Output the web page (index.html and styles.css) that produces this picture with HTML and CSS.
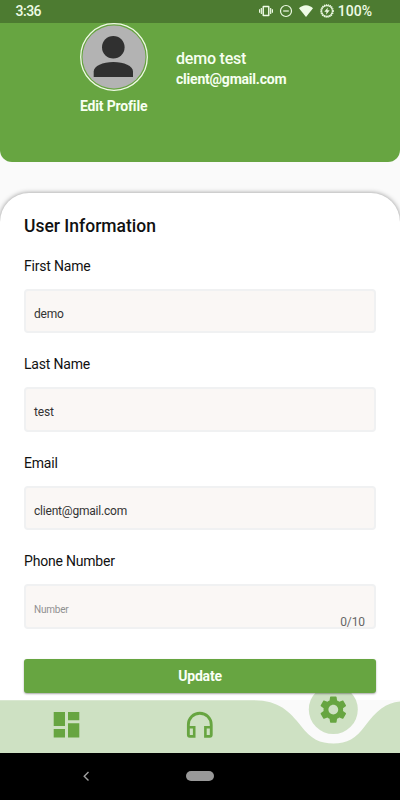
FILE: index.html
```html
<!DOCTYPE html>
<html lang="en">
<head>
<meta charset="utf-8">
<title>Profile</title>
<link rel="stylesheet" href="styles.css">
</head>
<body>
<div class="screen">
  <div class="status">
    <span class="time">3:36</span>
    <div class="status-icons">
      <svg width="14" height="14" viewBox="0 0 24 24" fill="currentColor"><path d="M0 15h2V9H0v6zm3 2h2V7H3v10zm19-8v6h2V9h-2zm-3 8h2V7h-2v10zM16.500 3h-9C6.670 3 6 3.670 6 4.500v15c0 .83.67 1.500 1.500 1.500h9c.83 0 1.500-.67 1.500-1.500v-15c0-.83-.67-1.500-1.500-1.500zM15.500 18.500h-7v-13h7z"/></svg>
      <svg width="14" height="14" viewBox="0 0 14 14" fill="none" stroke="currentColor" stroke-width="1.200"><circle cx="7" cy="7" r="5.500"/><path d="M4.200 7h5.600"/></svg>
      <svg width="14" height="14" viewBox="0 0 14 14" fill="currentColor"><path d="M7 13 0 4.300C1.700 2.500 4.200 1.200 7 1.200s5.300 1.300 7 3.100z"/></svg>
      <svg width="14" height="14" viewBox="0 0 14 14" fill="none" stroke="currentColor"><circle cx="7" cy="7" r="6.200" stroke-width="1.300" stroke-dasharray="1.200 .75"/><circle cx="7" cy="7" r="5.400" stroke-width="1.100"/><path d="M7.900 3.400 4.300 7.700h2.200l-.5 3 3.700-4.400H7.400z" fill="currentColor" stroke="none"/></svg>
      <span class="battery">100%</span>
    </div>
  </div>
  <header class="header">
    <div class="profile">
      <svg class="avatar" width="68" height="68" viewBox="0 0 68 68"><circle cx="34" cy="34" r="33.300" fill="none" stroke="#f0fae6" stroke-width="1.300"/><circle cx="34" cy="34" r="31.500" fill="#b3b3b3"/><circle cx="33.300" cy="24.200" r="11.300" fill="#303030"/><path d="M13.700 54v-5.500c0-5.500 9-9.500 19.700-9.500S53 43 53 48.500V54z" fill="#303030"/></svg>
      <span class="edit">Edit Profile</span>
    </div>
    <div class="identity">
      <span class="name">demo test</span>
      <span class="mail">client@gmail.com</span>
    </div>
  </header>
  <main class="card">
    <h1 class="title">User Information</h1>
    <div class="group"><span class="label">First Name</span><div class="field"><span class="value">demo</span></div></div>
    <div class="group"><span class="label">Last Name</span><div class="field"><span class="value">test</span></div></div>
    <div class="group"><span class="label">Email</span><div class="field"><span class="value">client@gmail.com</span></div></div>
    <div class="group"><span class="label">Phone Number</span><div class="field"><span class="hint">Number</span><span class="counter">0/10</span></div></div>
    <div class="update">Update</div>
  </main>
  <nav class="nav">
    <svg width="400" height="53" viewBox="0 0 400 53">
      <rect width="400" height="53" fill="#fafafa"/>
      <path d="M0 .3H254C279 .3 290 12 301 26C311 39 320 43.500 333.500 43.500C347 43.500 356 38.500 365 26C376 11 386 2.500 400 1.500V53H0z" fill="#cee1c3"/>
      <circle cx="333.300" cy="9.500" r="24.500" fill="#cee1c3"/>
      <g fill="#67a541">
        <path d="M53.700 12H65v14H53.700zM68 12h11.300v8.300H68zM53.700 29H65v8.500H53.700zM68 23.300h11.300v14.200H68z"/>
        <path transform="translate(184.200 8.800) scale(1.300)" d="M12 2.300a9.900 9.900 0 0 0-9.900 9.900V20a2.200 2.200 0 0 0 2.200 2.200h4.400v-8.900H4.300v-1.100a7.700 7.700 0 0 1 15.400 0v1.100h-4.400v8.900h4.400a2.200 2.200 0 0 0 2.200-2.200v-7.800A9.900 9.900 0 0 0 12 2.300zM6.700 15.200V20.100H4.300v-4.900zM19.700 20.100h-2.400v-4.900h2.400z"/>
        <path transform="translate(317 -6.700) scale(1.360)" d="M19.140 12.940c.04-.3.060-.61.060-.94 0-.32-.02-.64-.07-.94l2.030-1.580c.18-.14.23-.41.120-.61l-1.920-3.320c-.12-.22-.37-.29-.59-.22l-2.390.96c-.5-.38-1.030-.7-1.620-.94l-.36-2.540c-.04-.24-.24-.41-.48-.41h-3.840c-.24 0-.43.17-.47.410l-.36 2.540c-.59.240-1.130.570-1.620.940l-2.390-.96c-.22-.08-.47 0-.59.220L2.740 8.870c-.12.210-.08.470.12.610l2.030 1.580c-.05.300-.09.630-.09.940s.02.640.07.940l-2.030 1.580c-.18.140-.23.410-.12.610l1.920 3.320c.12.220.37.290.59.220l2.390-.96c.5.380 1.030.7 1.620.940l.36 2.540c.05.240.24.410.48.410h3.840c.24 0 .44-.17.470-.410l.36-2.540c.59-.24 1.130-.56 1.620-.94l2.390.96c.22.080.47 0 .59-.220l1.920-3.320c.12-.22.070-.47-.12-.61l-2.010-1.580zM12 15.600c-1.980 0-3.600-1.620-3.600-3.600s1.620-3.600 3.600-3.600 3.600 1.620 3.600 3.600-1.620 3.600-3.600 3.600z"/>
      </g>
    </svg>
  </nav>
  <div class="system">
    <svg width="400" height="47" viewBox="0 0 400 47"><path d="M88.500 19 84.200 23.300 88.500 27.600" fill="none" stroke="#a0a0a0" stroke-width="1.400"/><rect x="186" y="18" width="28" height="10" rx="5" fill="#999"/></svg>
  </div>
</div>
</body>
</html>
```
FILE: styles.css
```css
* { box-sizing: border-box; }
body { margin: 0; font-family: Roboto, "Liberation Sans", sans-serif; background: #fafafa; }
svg { display: block; }
span { white-space: nowrap; }
.screen { width: 400px; height: 800px; display: flex; flex-direction: column; overflow: hidden; background: #fafafa; }
.status { height: 23px; flex: none; background: #4d7b31; color: #eefbe5; display: flex; justify-content: space-between; align-items: center; padding: 0 28px 1px 15.5px; }
.time { font-size: 14px; font-weight: 500; letter-spacing: -.5px; }
.status-icons { display: flex; align-items: center; gap: 6.3px; }
.battery { font-size: 14px; font-weight: 500; letter-spacing: 0; margin-left: -2px; }
.header { height: 139px; flex: none; background: #67a541; border-radius: 0 0 12px 12px; color: #f7fff1; display: flex; padding-left: 80px; gap: 28px; }
.profile { width: 68px; display: flex; flex-direction: column; gap: 7px; }
.edit { font-size: 14px; font-weight: 700; line-height: 16px; letter-spacing: -.17px; }
.identity { display: flex; flex-direction: column; padding-top: 26px; }
.name { font-size: 16px; font-weight: 500; line-height: 20px; letter-spacing: -.2px; }
.mail { font-size: 14px; font-weight: 700; line-height: 20px; letter-spacing: -.22px; }
.card { margin-top: 30.5px; height: 507px; flex: none; background: #fff; border-radius: 29px 29px 0 0; box-shadow: 0 0 5px rgba(0,0,0,.42); padding: 22px 24px 0; }
.title { margin: 0; font-size: 17.5px; font-weight: 500; line-height: 22px; color: #111; }
.group { height: 98.5px; padding-top: 18px; }
.label { display: block; font-size: 14px; line-height: 22px; letter-spacing: -.2px; color: #111; }
.field { width: 352px; height: 44.5px; margin-top: 12px; border: 2px solid #f0f1f2; border-radius: 4px; background: #faf7f5; padding: 15px 9px 0 8px; display: flex; justify-content: space-between; }
.value { font-size: 12px; line-height: 17px; letter-spacing: -.2px; color: #333; }
.hint { font-size: 10px; line-height: 18px; letter-spacing: -.2px; color: #909090; }
.counter { font-size: 12px; line-height: 17px; letter-spacing: -.1px; color: #666; padding-top: 13px; }
.update { height: 34px; margin-top: 28.5px; position: relative; z-index: 1; border-radius: 3px; background: #67a541; color: #fafff7; font-size: 14px; letter-spacing: -.2px; font-weight: 700; line-height: 34px; text-align: center; box-shadow: 0 1px 2px rgba(0,0,0,.35); }
.nav { height: 53px; flex: none; margin-top: .5px; }
.nav svg { overflow: visible; }
.system { height: 47px; flex: none; background: #000; }
```
